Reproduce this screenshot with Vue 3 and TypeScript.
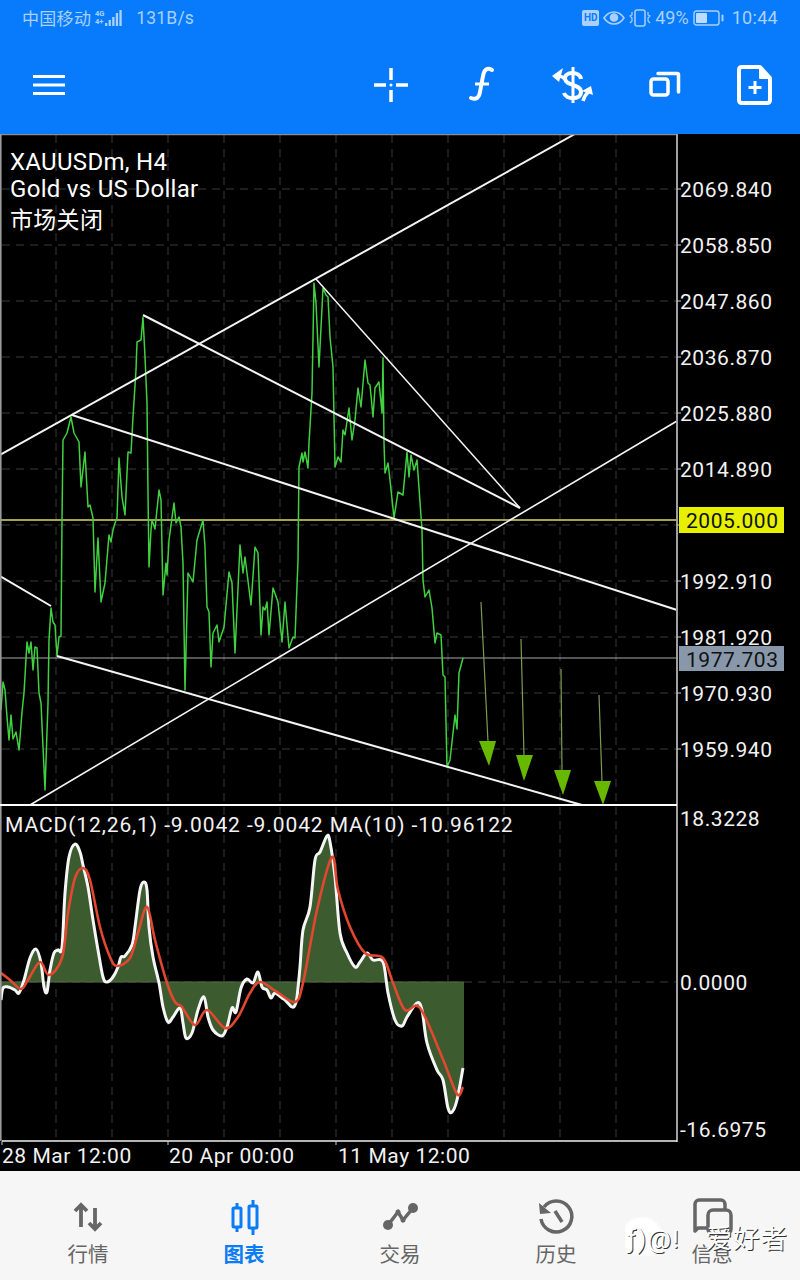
<template>
  <div class="phone">
    <!-- status bar -->
    <div class="status-bar">
      <div class="status-left">
        <span class="carrier">中国移动</span>
        <svg class="signal" width="28" height="18" viewBox="0 0 28 18">
          <text x="0" y="7" class="signal-text">4G</text>
          <text x="0" y="15" class="signal-text">4+</text>
          <rect v-for="(h, i) in signalBars" :key="i" :x="10 + i * 3.6" :y="17 - h" width="2.3" :height="h" fill="#a9d0ff" />
        </svg>
        <span class="speed">131B/s</span>
      </div>
      <div class="status-right">
        <span class="hd">HD</span>
        <svg width="22" height="16" viewBox="0 0 22 16" fill="none" stroke="#a9d0ff" stroke-width="1.6">
          <path d="M1 8c3-4.500 6-6 10-6s7 1.500 10 6c-3 4.500-6 6-10 6s-7-1.500-10-6z" />
          <circle cx="11" cy="7.500" r="3.500" fill="#a9d0ff" />
        </svg>
        <svg width="22" height="18" viewBox="0 0 22 18" fill="none" stroke="#a9d0ff" stroke-width="1.500">
          <rect x="6" y="1" width="10" height="16" rx="2" />
          <path d="M3 3v3l-2 1 2 2v3l-2 2M19 3v3l2 1-2 2v3l2 2" stroke-width="1.200" />
        </svg>
        <span class="battery-pct">49%</span>
        <svg width="31" height="16" viewBox="0 0 31 16" fill="none">
          <rect x="1" y="1" width="25" height="14" rx="2.500" stroke="#a9d0ff" stroke-width="1.400" />
          <rect x="3" y="3" width="11" height="10" rx="1" fill="#bcdcff" />
          <rect x="28.500" y="4.500" width="2" height="7" rx="1" fill="#a9d0ff" />
        </svg>
        <span class="clock">10:44</span>
      </div>
    </div>

    <!-- toolbar -->
    <div class="toolbar">
      <div class="menu-btn">
        <svg width="34" height="22" viewBox="0 0 34 22" fill="#fff">
          <rect x="1" y="1" width="32" height="3" />
          <rect x="1" y="9.500" width="32" height="3" />
          <rect x="1" y="18" width="32" height="3" />
        </svg>
      </div>
      <div class="tool-btn">
        <svg width="48" height="48" viewBox="0 0 48 48" fill="none" stroke="#fff" stroke-width="3.500">
          <path d="M7 24h12M29 24h12M24 7v12M24 29v12" />
          <circle cx="24" cy="24" r="1.500" fill="#fff" stroke="none" />
        </svg>
      </div>
      <div class="tool-btn">
        <svg width="48" height="48" viewBox="0 0 48 48" fill="none" stroke="#fff" stroke-width="4" stroke-linecap="round">
          <path d="M34 9c-5-3-8 0-9 6l-3 16c-1 6-4 8-9 6" />
          <path d="M17 23h14" stroke-linecap="butt" stroke-width="3" />
        </svg>
      </div>
      <div class="tool-btn">
        <svg width="48" height="48" viewBox="0 0 48 48" fill="none" stroke="#fff" stroke-width="4">
          <path d="M24 6v36" stroke-width="3" />
          <path d="M32 18c-1-8-17-8-16 0 1 7 16 5 16 13 0 8-15 8-17 1" />
          <path d="M9 15c3 0 5 1 7 3" stroke-width="3.500" />
          <path d="M3 15l11-8-4 14z" fill="#fff" stroke="none" />
          <path d="M34 40c1-4 3-7 6-10" stroke-width="3.500" />
          <path d="M44 34l-11-4 9-5z" fill="#fff" stroke="none" />
        </svg>
      </div>
      <div class="tool-btn">
        <svg width="48" height="48" viewBox="0 0 48 48" fill="none" stroke="#fff" stroke-width="3.500" stroke-linejoin="round">
          <rect x="11" y="18" width="17" height="16" rx="2.500" />
          <path d="M18 12.500h19c1 0 1.500.5 1.500 1.500v17" stroke-linecap="round" />
        </svg>
      </div>
      <div class="tool-btn">
        <svg width="48" height="48" viewBox="0 0 48 48" fill="none" stroke="#fff" stroke-width="4" stroke-linejoin="round">
          <path d="M11 6h18l10 11v22c0 2-1 3-3 3H11c-2 0-3-1-3-3V9c0-2 1-3 3-3z" />
          <path d="M29 6l10 11H29z" fill="#fff" stroke-width="2" />
          <path d="M24 20v13M17.500 26.500h13" stroke-width="3" />
        </svg>
      </div>
    </div>

    <!-- chart -->
    <svg class="chart" width="800" height="1037" viewBox="0 134 800 1037">
      <g class="grid">
        <line v-for="x in gridX" :key="'x' + x" :x1="x" y1="135" :x2="x" y2="1141" />
        <line v-for="y in gridY" :key="'y' + y" x1="2" :y1="y" x2="677" :y2="y" />
        <line x1="2" y1="982" x2="677" y2="982" />
      </g>

      <polygon :points="histogram" fill="#3c5c30" />
      <line x1="0" y1="982" x2="464" y2="982" stroke="#556b48" stroke-width="1" />

      <line x1="0" y1="520" x2="677" y2="520" stroke="#d8d86a" stroke-width="1.500" />
      <line x1="0" y1="658" x2="677" y2="658" stroke="#a8a8a8" stroke-width="1" />

      <polyline :points="pricePoints" fill="none" stroke="#40d040" stroke-width="1.500" stroke-linejoin="round" />

      <line
        v-for="(l, i) in trendLines"
        :key="'t' + i"
        :x1="l[0]"
        :y1="l[1]"
        :x2="l[2]"
        :y2="l[3]"
        stroke="#f4f4f4"
        :stroke-width="l[4]"
      />

      <g v-for="(a, i) in arrows" :key="'a' + i">
        <line :x1="a.from[0]" :y1="a.from[1]" :x2="a.to[0]" :y2="a.to[1]" stroke="#7d9a55" stroke-width="1.200" />
        <polygon :points="a.head" fill="#66b800" />
      </g>

      <path :d="smooth(macdPoints)" fill="none" stroke="#f6f6f6" stroke-width="3" stroke-linejoin="round" />
      <path :d="smooth(signalPoints)" fill="none" stroke="#e2472f" stroke-width="2.600" stroke-linejoin="round" />

      <!-- frame -->
      <line x1="0" y1="134.500" x2="678" y2="134.500" stroke="#8c8c8c" stroke-width="1.500" />
      <line x1="0.800" y1="134" x2="0.800" y2="1141" stroke="#9a9a9a" stroke-width="1.600" />
      <line x1="677" y1="134" x2="677" y2="1142" stroke="#a0a0a0" stroke-width="2" />
      <line x1="0" y1="805" x2="677" y2="805" stroke="#fff" stroke-width="2" />
      <line x1="2" y1="1141" x2="677" y2="1141" stroke="#f0f0f0" stroke-width="1.500" />

      <!-- axis -->
      <g v-for="p in priceLabels" :key="p.text">
        <line x1="677" :y1="p.y" x2="681" :y2="p.y" stroke="#ccc" stroke-width="1" />
        <text x="680" :y="p.y + 8" class="axis">{{ p.text }}</text>
      </g>
      <text x="680" y="826" class="axis">18.3228</text>
      <text x="680" y="990" class="axis">0.0000</text>
      <text x="680" y="1137" class="axis">-16.6975</text>

      <rect x="679" y="507" width="105" height="26" fill="#e6f000" />
      <text x="686" y="528" class="axis dark">2005.000</text>
      <rect x="679" y="646" width="105" height="25" fill="#8898aa" />
      <text x="686" y="667" class="axis dark">1977.703</text>

      <text x="10" y="170" class="title">XAUUSDm, H4</text>
      <text x="10" y="197" class="title">Gold vs US Dollar</text>
      <text x="10" y="228" class="title cjk">市场关闭</text>
      <text x="5" y="832" class="axis macd">MACD(12,26,1) -9.0042 -9.0042 MA(10) -10.96122</text>

      <g v-for="t in timeLabels" :key="t.text">
        <line :x1="t.tick" y1="1141" :x2="t.tick" y2="1145" stroke="#ccc" stroke-width="1" />
        <text :x="t.x" y="1163" class="axis">{{ t.text }}</text>
      </g>
    </svg>

    <!-- bottom tabs -->
    <div class="tabbar">
      <div class="tab">
        <svg width="36" height="36" viewBox="0 0 36 36" fill="none" stroke="#666" stroke-width="3.800">
          <path d="M11 28V7M5 12l6-6 6 6" />
          <path d="M25 9v21M19 24l6 6 6-6" />
        </svg>
        <span>行情</span>
      </div>
      <div class="tab active">
        <svg width="36" height="36" viewBox="0 0 36 36" fill="none" stroke="#0a7cf5" stroke-width="3">
          <rect x="7" y="9" width="8" height="19" rx="1" />
          <path d="M11 4v5M11 28v5" />
          <rect x="23" y="7" width="8" height="22" rx="1" />
          <path d="M27 1v6M27 29v7" />
        </svg>
        <span>图表</span>
      </div>
      <div class="tab">
        <svg width="36" height="36" viewBox="0 0 36 36" fill="none" stroke="#666" stroke-width="3.500">
          <path d="M6 26l10-13 5 8 10-12" />
          <circle cx="6" cy="26" r="5" fill="#666" stroke="none" />
          <circle cx="16" cy="13" r="2.500" fill="#666" stroke="none" />
          <circle cx="21" cy="21" r="2.500" fill="#666" stroke="none" />
          <circle cx="31" cy="9" r="5" fill="#666" stroke="none" />
        </svg>
        <span>交易</span>
      </div>
      <div class="tab">
        <svg width="36" height="36" viewBox="0 0 36 36" fill="none" stroke="#666" stroke-width="3.500">
          <path d="M6 8a15.500 15.500 0 1 1-3 12" />
          <path d="M1 4l1 11 11-1z" fill="#666" stroke="none" />
          <path d="M17 12l7 11" />
        </svg>
        <span>历史</span>
      </div>
      <div class="tab">
        <svg width="44" height="36" viewBox="0 1 44 36" fill="none" stroke="#666" stroke-width="3.500" stroke-linejoin="round">
          <path d="M17 30H8l-3 3V6c0-2 2-4 4-4h22c2 0 4 2 4 4v6" />
          <rect x="18" y="12" width="23" height="24" rx="5" />
        </svg>
        <span>信息</span>
      </div>
      <span class="watermark">ƒ)@! 爱好者</span>
    </div>
  </div>
</template>

<script setup lang="ts">
interface Arrow {
  from: [number, number]
  to: [number, number]
  head: string
}

const signalBars = [3, 6, 9, 13, 16]

const gridX = Array.from({ length: 11 }, (_, i) => 56 + i * 56)
const gridY = Array.from({ length: 11 }, (_, i) => 189 + i * 56)

const priceLabels = [
  { y: 189, text: '2069.840' },
  { y: 245, text: '2058.850' },
  { y: 301, text: '2047.860' },
  { y: 357, text: '2036.870' },
  { y: 413, text: '2025.880' },
  { y: 469, text: '2014.890' },
  { y: 525, text: '2003.900' },
  { y: 581, text: '1992.910' },
  { y: 637, text: '1981.920' },
  { y: 693, text: '1970.930' },
  { y: 749, text: '1959.940' },
]

const timeLabels = [
  { x: 2, tick: 2, text: '28 Mar 12:00' },
  { x: 169, tick: 168, text: '20 Apr 00:00' },
  { x: 338, tick: 336, text: '11 May 12:00' },
]

// x1, y1, x2, y2, width
const trendLines: number[][] = [
  [0, 455, 575, 134, 2],
  [72, 415, 677, 610, 2],
  [143, 315, 520, 508, 2],
  [316, 279, 520, 508, 1.5],
  [30, 805, 677, 421, 1.6],
  [0, 576, 51, 606, 2],
  [57, 656, 582, 805, 2],
]

const arrows: Arrow[] = [
  { from: [481, 602], to: [488, 742], head: '479,741 496,741 489,766' },
  { from: [521, 639], to: [524, 756], head: '516,755 533,755 524,781' },
  { from: [561, 669], to: [562, 771], head: '554,770 571,770 563,795' },
  { from: [599, 695], to: [602, 782], head: '594,781 611,781 603,805' },
]

const pricePoints =
  '1,710 3,682 5,690 7,717 9,740 11,715 13,739 16,732 19,750 22,712 24,693 27,642 29,653 31,642 33,670 35,647 37,648 ' +
  '39,693 41,703 45,790 48,703 49,640 51,608 53,622 55,625 57,656 59,637 61,636 62,520 63,440 67,433 71,417 74,433 ' +
  '79,442 81,487 85,452 88,507 90,505 93,518 95,592 98,538 101,602 105,583 109,535 111,542 113,530 115,523 117,518 ' +
  '119,458 122,497 125,515 128,452 131,453 133,417 136,370 137,342 141,340 143,317 145,357 147,403 148,493 149,567 ' +
  '151,530 152,520 155,529 159,490 161,500 163,595 166,563 167,575 169,540 174,503 176,523 179,517 181,527 183,563 ' +
  '185,690 188,573 193,582 197,540 203,520 205,547 207,607 209,612 211,667 213,633 217,625 219,642 224,627 229,572 ' +
  '232,583 235,653 240,545 243,573 245,557 251,605 255,547 258,553 261,635 263,607 265,610 267,602 269,635 273,588 ' +
  '278,602 282,642 285,602 289,648 293,637 295,638 298,560 299,467 302,453 303,462 305,452 308,468 309,443 312,393 ' +
  '314,283 316,303 319,367 323,288 326,295 328,297 330,337 333,367 335,467 338,457 341,462 343,430 345,435 349,408 ' +
  '352,440 355,420 358,388 361,407 365,360 368,383 370,385 373,417 375,388 379,382 382,413 383,358 384,443 385,473 ' +
  '388,463 390,480 394,518 398,492 403,495 407,452 409,477 411,455 414,470 417,460 422,530 423,580 425,597 429,590 ' +
  '432,608 435,643 437,633 441,635 443,675 445,677 447,767 450,760 455,715 457,729 459,673 463,658'

const macdPoints =
  '1,1000 3,988 8,987 15,990 19,993 24,980 30,958 36,949 41,963 44,987 47,992 50,970 54,953 58,950 62,947 65,893 ' +
  '69,857 75,844 80,852 83,865 88,887 93,920 98,950 103,977 107,982 113,977 118,967 121,957 125,956 132,945 135,927 ' +
  '140,890 144,882 147,890 149,927 153,957 159,983 163,1007 168,1022 173,1017 180,1008 183,1023 186,1038 192,1033 ' +
  '198,1010 204,997 208,1017 213,1030 222,1036 227,1027 232,1008 236,1012 241,988 247,979 253,983 258,972 262,987 ' +
  '267,990 271,998 275,993 282,998 285,1000 292,1007 295,1005 297,997 300,967 303,930 310,907 315,860 320,852 ' +
  '327,836 330,842 335,877 340,933 347,953 355,967 360,962 367,953 373,960 383,962 388,993 395,1020 402,1026 ' +
  '407,1017 417,1003 422,1010 427,1043 437,1070 443,1080 448,1108 452,1112 457,1100 463,1068'

const signalPoints =
  '1,973 10,980 21,989 28,980 40,962 49,975 62,958 68,913 75,878 83,868 90,880 100,927 110,957 117,966 130,958 ' +
  '138,933 147,907 155,940 167,983 175,1002 182,1007 195,1025 207,1010 225,1028 238,1017 250,993 260,982 277,992 ' +
  '295,1002 303,983 317,910 332,857 338,890 350,927 365,953 383,958 393,983 405,1010 420,1008 442,1057 457,1094 463,1087'

const histogram = `1,982 ${macdPoints} 464,1068 464,982`

// catmull-rom through the points, the indicator lines are curves
const smooth = (points: string): string => {
  const p = points.split(' ').map((s) => s.split(',').map(Number))
  let d = `M${p[0][0]} ${p[0][1]}`
  for (let i = 0; i < p.length - 1; i++) {
    const a = p[Math.max(i - 1, 0)]
    const b = p[i]
    const c = p[i + 1]
    const e = p[Math.min(i + 2, p.length - 1)]
    const c1x = b[0] + (c[0] - a[0]) / 6
    const c1y = b[1] + (c[1] - a[1]) / 6
    const c2x = c[0] - (e[0] - b[0]) / 6
    const c2y = c[1] - (e[1] - b[1]) / 6
    d += `C${c1x.toFixed(1)} ${c1y.toFixed(1)} ${c2x.toFixed(1)} ${c2y.toFixed(1)} ${c[0]} ${c[1]}`
  }
  return d
}
</script>

<style scoped>
.phone {
  position: relative;
  width: 800px;
  height: 1280px;
  overflow: hidden;
  display: flex;
  flex-direction: column;
  background: #000;
  font-family: Roboto, 'Noto Sans CJK SC', sans-serif;
}

/* status bar */
.status-bar {
  box-sizing: border-box;
  height: 38px;
  padding: 0 22px 3px;
  display: flex;
  align-items: center;
  justify-content: space-between;
  background: #087bfd;
  color: #a9d0ff;
  font-size: 17px;
}

.status-left,
.status-right {
  display: flex;
  align-items: center;
}

.carrier {
  letter-spacing: 0.3px;
}

.signal {
  margin-left: 4px;
}

.signal-text {
  font-size: 7.5px;
  font-weight: 700;
  fill: #a9d0ff;
}

.speed {
  margin-left: 13px;
  font-size: 17.5px;
  letter-spacing: 0.2px;
}

.status-right {
  gap: 4px;
}

.hd {
  width: 17px;
  height: 16px;
  line-height: 16px;
  text-align: center;
  border-radius: 2px;
  background: #a9d0ff;
  color: #087bfd;
  font-size: 10px;
  font-weight: 700;
}

.battery-pct {
  font-size: 18px;
}

.clock {
  margin-left: 4px;
  font-size: 18px;
  letter-spacing: 0.3px;
}

/* toolbar */
.toolbar {
  box-sizing: border-box;
  height: 96px;
  padding-bottom: 2px;
  display: flex;
  align-items: center;
  background: #087bfd;
}

.menu-btn {
  flex: 1;
  padding-left: 32px;
  display: flex;
  align-items: center;
}

.tool-btn {
  width: 91px;
  display: flex;
  justify-content: center;
}

/* chart */
.chart {
  display: block;
  flex-shrink: 0;
  background: #000;
}

.grid line {
  stroke: #3a3a3a;
  stroke-width: 1;
  stroke-dasharray: 8 6;
}

.axis {
  fill: #f2f2f2;
  font-size: 21px;
  letter-spacing: 0.55px;
}

.axis.dark {
  fill: #111;
}

.axis.macd {
  letter-spacing: 0.9px;
}

.title {
  fill: #fff;
  font-size: 24px;
  letter-spacing: 0.3px;
}

.title.cjk {
  font-size: 23px;
}

/* bottom tabs */
.tabbar {
  position: relative;
  flex: 1;
  padding: 0 10px;
  display: flex;
  background: #f6f6f6;
}

.tab {
  flex: 1;
  padding-top: 28px;
  display: flex;
  flex-direction: column;
  align-items: center;
  color: #666;
  font-size: 20.5px;
}

.tab svg {
  flex-shrink: 0;
  overflow: visible;
}

.tab span {
  margin-top: 6px;
  line-height: 28px;
}

.tab.active {
  color: #0a7cf5;
  font-weight: 700;
}

.watermark {
  position: absolute;
  left: 625px;
  top: 46px;
  padding: 0 4px 0 2px;
  color: #fff;
  font-size: 26.5px;
  letter-spacing: 1px;
  word-spacing: 18px;
  white-space: nowrap;
  text-shadow: 1px 1px 0 #333;
  background: radial-gradient(circle at 17px 20px, #fff 0, #fff 18px, transparent 22px);
}
</style>
